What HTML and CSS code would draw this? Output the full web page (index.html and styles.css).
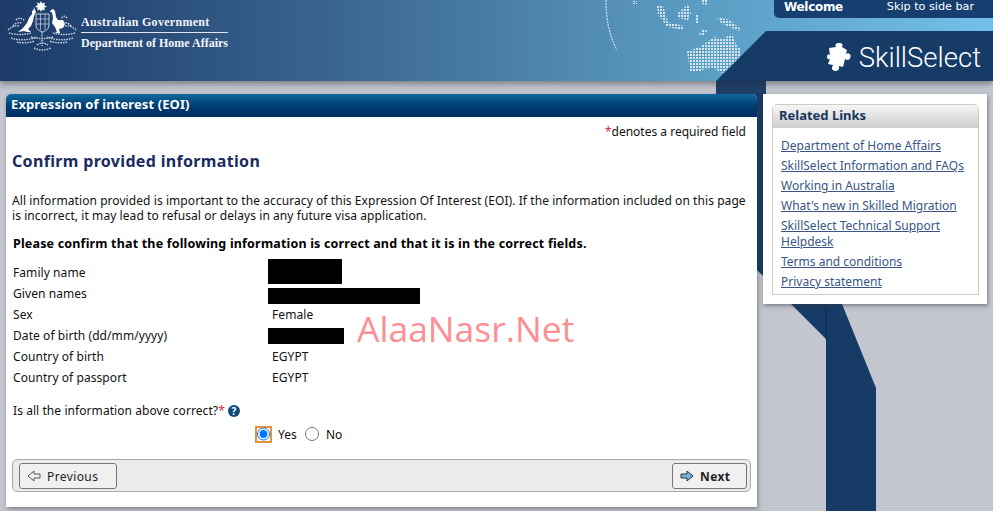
FILE: index.html
```html
<!DOCTYPE html>
<html lang="en">
<head>
    <meta charset="UTF-8">
    <title>SkillSelect - Expression of interest</title>
    <link rel="stylesheet" href="styles.css">
</head>
<body>

<!-- band behind the panels -->
<svg class="band" width="993" height="511" viewBox="0 0 993 511">
    <polygon points="716,81 766,81 766,116 842,304 876,388 876,511 826,511 826,339 716,229" fill="#153b66"/>
    <rect x="716" y="81" width="50" height="13" fill="#1f3f69"/>
    <line x1="826" y1="304" x2="826" y2="339" stroke="#0f2f55"/>
</svg>

<!-- Header -->
<div class="header">
    <div class="gov-brand">
        <svg class="crest" width="70" height="50" viewBox="0 0 70 50" fill="#fff">
            <polygon points="34,0 35.2,2.5 38,1.5 37.2,4.2 40,5.5 37.2,6.8 38,9.5 35.2,8.5 34,11 32.8,8.5 30,9.5 30.8,6.8 28,5.5 30.8,4.2 30,1.5 32.8,2.5"/>
            <path d="M27,6 L26.5,9 L25,10 L25,13 L22,17 L20,22 L16,27 L11,31 L17,30 L20,31 L24,31 L21,28 L24,25 L26,20 L27,15 L29,11 L28,9 Z"/>
            <path d="M46,8 L44,9 L43,11 L45,11.5 L46,17 L45,22 L48,26 L50,31 L48,32 L53,32 L52,28 L56,27 L58,23 L56,19 L51,19 L49,16 L48,10 Z"/>
            <g fill="none" stroke="#fff" stroke-width=".9">
                <path d="M29,13 H42 V24 Q42,29 35.5,31 Q29,29 29,24 Z" stroke-opacity=".8"/>
                <path d="M29,18 H42 M29,23 H42 M33.5,13 V29 M38,13 V29" stroke-opacity=".6"/>
            </g>
            <g fill="none" stroke="#e4ebf2" stroke-width="1.4" stroke-dasharray="1.6 1" stroke-opacity=".85">
                <path d="M1,29 Q6,24 12,25 M2,32 Q12,35 24,32 M9,19 Q13,15 18,20 M6,25 Q9,21 15,22"/>
                <path d="M69,29 Q64,24 58,25 M68,32 Q58,35 46,32 M60,17 Q57,13 54,18 M64,25 Q61,21 56,22"/>
                <path d="M4,37 Q16,41 30,36 M66,37 Q54,41 40,36 M10,41 Q18,43 28,40 M60,41 Q52,43 42,40"/>
                <path d="M35,31 V45 M30,44 Q35,40 41,44 M27,47 Q35,51 44,47 M24,36 Q35,39 46,36"/>
            </g>
        </svg>
        <div class="gov-text">
            <div class="gov-name">Australian Government</div>
            <div class="gov-dept">Department of Home Affairs</div>
        </div>
    </div>

    <svg class="globe" width="150" height="81" viewBox="590 0 150 81">
        <defs>
            <pattern id="dots" width="3" height="3" patternUnits="userSpaceOnUse">
                <rect width="2" height="2" fill="#d5e6f1"/>
            </pattern>
        </defs>
        <path d="M606,0 Q606,30 617,50" fill="none" stroke="#cfe3ef" stroke-width="1.2" stroke-dasharray="2 1"/>
        <g fill="url(#dots)">
            <polygon points="687,51 700,47 707,42 714,37 722,39 732,34 737,46 745,52 732,70 722,73 711,67 697,72 690,71"/>
            <polygon points="717,17 730,20 744,32 736,30 721,23"/>
            <polygon points="657,6 663,6 668,22 684,26 684,30 667,27 658,14"/>
            <polygon points="677,14 688,4 691,13 688,20 678,18"/>
            <polygon points="696,14 699,14 699,24 696,24"/>
            <polygon points="702,0 708,0 708,5 702,4"/>
            <polygon points="632,1 637,1 637,4 632,4"/>
            <polygon points="702,30 708,29 703,36 699,34"/>
        </g>
    </svg>

    <div class="header-right">
        <div class="top-nav">
            <a class="top-nav-welcome" href="#">Welcome</a>
            <a class="top-nav-skip" href="#">Skip to side bar</a>
        </div>
        <div class="product">
            <svg class="puzzle" width="25" height="28" viewBox="0 0 25 28" fill="#fff">
                <path d="M3,5 L10,4 Q8,0 13,0 Q18,0 16,4 L21,7 L20,11 Q23,9 24.5,12 Q25,17 21,17 L19,16 L17,24 L13,23 Q14,28 9,28 Q4,27 7,22 L2,21 L4,16 Q1,17 1,14 Q1,10 4,12 Z"/>
            </svg>
            <span class="product-name">SkillSelect</span>
        </div>
    </div>
</div>

<!-- Main content -->
<div class="page">
    <div class="panel">
        <div class="panel-title">Expression of interest (EOI)</div>
        <div class="panel-body">
            <div class="required-note"><span class="req">*</span>denotes a required field</div>
            <h2>Confirm provided information</h2>
            <p class="intro">All information provided is important to the accuracy of this Expression Of Interest (EOI). If the information included on this page is incorrect, it may lead to refusal or delays in any future visa application.</p>
            <p class="confirm">Please confirm that the following information is correct and that it is in the correct fields.</p>

            <div class="details">
                <div class="details-label">Family name</div>
                <div><span class="redact redact-family"></span></div>
                <div class="details-label">Given names</div>
                <div><span class="redact redact-given"></span></div>
                <div class="details-label">Sex</div>
                <div>Female</div>
                <div class="details-label">Date of birth (dd/mm/yyyy)</div>
                <div><span class="redact redact-dob"></span></div>
                <div class="details-label">Country of birth</div>
                <div>EGYPT</div>
                <div class="details-label">Country of passport</div>
                <div>EGYPT</div>
            </div>

            <div class="question">
                Is all the information above correct?<span class="req">*</span>
                <span class="help">?</span>
            </div>
            <div class="answers">
                <span class="radio-focus"><input type="radio" name="correct" checked></span>
                <label class="answer-yes">Yes</label>
                <input type="radio" name="correct">
                <label class="answer-no">No</label>
            </div>

            <div class="toolbar">
                <button class="btn">
                    <svg width="14" height="12" viewBox="0 0 14 12"><polygon points="1,6 7,1 7,4 13,4 13,8 7,8 7,11" fill="#f2f2f2" stroke="#555"/></svg>
                    Previous
                </button>
                <button class="btn btn-next">
                    <svg width="14" height="12" viewBox="0 0 14 12"><polygon points="13,6 7,1 7,4 1,4 1,8 7,8 7,11" fill="#6db6dc" stroke="#333"/></svg>
                    Next
                </button>
            </div>
        </div>
        <div class="watermark">AlaaNasr.Net</div>
    </div>

    <div class="side">
        <div class="side-box">
            <div class="side-title">Related Links</div>
            <ul class="side-links">
                <li><a href="#">Department of Home Affairs</a></li>
                <li><a href="#">SkillSelect Information and FAQs</a></li>
                <li><a href="#">Working in Australia</a></li>
                <li><a href="#">What's new in Skilled Migration</a></li>
                <li><a href="#">SkillSelect Technical Support Helpdesk</a></li>
                <li><a href="#">Terms and conditions</a></li>
                <li><a href="#">Privacy statement</a></li>
            </ul>
        </div>
    </div>
</div>

</body>
</html>
```

FILE: styles.css
```css
html, body {
    height: 511px;
    overflow: hidden;
}
body {
    margin: 0;
    position: relative;
    background-color: #c3c6cf;
    font-family: "Noto Sans", Tahoma, sans-serif;
    font-size: 12px;
    color: #111;
}
.band {
    position: absolute;
    left: 0;
    top: 0;
}

/* Header */
.header {
    position: relative;
    height: 81px;
    display: flex;
    justify-content: space-between;
    background: linear-gradient(90deg, #1b3a68 0%, #3a648f 33%, #5b9cc2 70%, #72c0ea 100%);
    box-shadow: 0 3px 6px rgba(40, 40, 50, 0.45);
}
.gov-brand {
    display: flex;
    align-items: flex-start;
    padding: 1px 0 0 7px;
}
.crest {
    flex: none;
}
.gov-text {
    margin: 14px 0 0 4px;
    font-family: "Liberation Serif", serif;
    font-weight: bold;
    font-size: 12px;
    color: #f2f5f9;
}
.gov-name {
    padding-bottom: 2px;
    border-bottom: 1px solid #dfe6ef;
    line-height: 15px;
    letter-spacing: 0.3px;
}
.gov-dept {
    padding-top: 3px;
    line-height: 15px;
}
.globe {
    position: absolute;
    left: 590px;
    top: 0;
}
.header-right {
    position: absolute;
    right: 0;
    top: 0;
    width: 277px;
    height: 81px;
    display: flex;
    flex-direction: column;
    align-items: flex-end;
}
.top-nav {
    width: 219px;
    height: 18px;
    box-sizing: border-box;
    display: flex;
    justify-content: space-between;
    padding: 0 19px 0 10px;
    background-color: #163f70;
    border-radius: 0 0 0 5px;
    font-family: "DejaVu Sans", sans-serif;
    font-size: 11.2px;
    line-height: 14px;
}
.top-nav a {
    color: #fff;
    text-decoration: none;
}
.top-nav-welcome {
    font-size: 12px;
    font-weight: bold;
    letter-spacing: -0.3px;
}
.product {
    width: 277px;
    height: 50px;
    margin-top: 13px;
    box-sizing: border-box;
    display: flex;
    align-items: center;
    justify-content: flex-end;
    gap: 8px;
    padding: 3px 12px 0 0;
    background-color: #153b66;
    clip-path: polygon(50px 0, 100% 0, 100% 100%, 0 100%);
}
.puzzle {
    margin-top: -2px;
}
.product-name {
    font-family: Roboto, "Liberation Sans", sans-serif;
    font-weight: 300;
    font-size: 27.5px;
    color: #fff;
}

/* Page */
.page {
    position: relative;
    display: flex;
    align-items: flex-start;
    gap: 6px;
    padding: 13px 0 0 6px;
}
.panel {
    position: relative;
    width: 751px;
    height: 413px;
    background-color: #fff;
    border-radius: 5px 5px 0 0;
    box-shadow: 1px 2px 4px rgba(60, 60, 70, 0.5);
}
.panel-title {
    height: 23px;
    padding-left: 5px;
    line-height: 21px;
    font-size: 13px;
    font-weight: bold;
    letter-spacing: 0.1px;
    color: #fff;
    background: linear-gradient(180deg, #0f6a9d 0%, #003a70 55%, #002f63 100%);
    border-radius: 5px 5px 0 0;
}
.panel-body {
    padding: 0 6px;
    letter-spacing: 0.07px;
}
.req {
    color: #d6303a;
}
.required-note {
    padding: 7px 5px 0 0;
    text-align: right;
    line-height: 16px;
    letter-spacing: 0;
}
h2 {
    margin: 10px 0 0;
    font-size: 16px;
    line-height: 22px;
    font-weight: bold;
    letter-spacing: 0.33px;
    color: #1a2b5f;
}
.intro {
    margin: 21px 0 0;
    line-height: 15px;
    width: 739px;
}
.confirm {
    margin: 13px 0 0 1px;
    line-height: 16px;
    font-size: 12.5px;
    font-weight: bold;
    letter-spacing: 0.18px;
    color: #000;
}
.details {
    display: grid;
    grid-template-columns: 259px 1fr;
    grid-auto-rows: 21px;
    align-items: center;
    margin: 10px 0 0 1px;
}
.redact {
    display: block;
    margin-left: -4px;
    background-color: #000;
}
.redact-family { width: 74px; height: 25px; margin-top: -3px; }
.redact-given { width: 152px; height: 16px; margin-top: 4px; }
.redact-dob { width: 76px; height: 16px; }
.question {
    margin: 12px 0 0 1px;
    line-height: 21px;
}
.help {
    display: inline-block;
    width: 12px;
    height: 12px;
    border-radius: 50%;
    background-color: #0e4a7c;
    color: #fff;
    font-size: 10px;
    font-weight: bold;
    line-height: 12px;
    text-align: center;
}
.answers {
    display: flex;
    align-items: center;
    height: 22px;
    margin: 2px 0 0 243px;
}
.answers input {
    width: 14px;
    height: 14px;
    margin: 0;
}
.radio-focus {
    display: flex;
    align-items: center;
    justify-content: center;
    width: 17px;
    height: 17px;
    box-sizing: border-box;
    background-color: #fff;
    border: 2px solid #e8923c;
}
.answer-yes {
    margin: 0 8px 0 6px;
}
.answer-no {
    margin-left: 7px;
}
.toolbar {
    display: flex;
    justify-content: space-between;
    align-items: flex-start;
    height: 33px;
    box-sizing: border-box;
    margin-top: 14px;
    padding: 3px 3px 0 6px;
    background-color: #ebebeb;
    border: 1px solid #a9a9a9;
    border-radius: 5px;
}
.btn {
    display: flex;
    align-items: center;
    gap: 6px;
    height: 26px;
    width: 98px;
    padding: 0 0 0 7px;
    font-family: inherit;
    font-size: 12px;
    letter-spacing: 0.4px;
    color: #222;
    background-color: #f0f0f0;
    border: 1px solid #777;
    border-radius: 3px;
}
.btn-next {
    width: 75px;
    font-weight: bold;
}
.watermark {
    position: absolute;
    left: 351px;
    top: 210px;
    font-family: "Open Sans", sans-serif;
    font-size: 35.5px;
    line-height: 48px;
    color: #fb9094;
}

/* Sidebar */
.side {
    width: 224px;
    height: 210px;
    box-sizing: border-box;
    padding: 10px 8px 0 9px;
    background-color: #fff;
    box-shadow: 1px 2px 4px rgba(60, 60, 70, 0.5);
}
.side-box {
    height: 191px;
    box-sizing: border-box;
    border: 1px solid #ccc;
    border-radius: 5px 5px 0 0;
}
.side-title {
    height: 23px;
    padding-left: 6px;
    line-height: 21px;
    font-size: 13px;
    font-weight: bold;
    color: #17375e;
    background: linear-gradient(180deg, #f6f6f6 0%, #cdcdcd 100%);
    border-radius: 4px 4px 0 0;
}
.side-links {
    list-style: none;
    margin: 0;
    padding: 10px 8px 0;
}
.side-links li {
    line-height: 16px;
    margin-bottom: 4px;
}
.side-links a {
    color: #3a5585;
}
```
